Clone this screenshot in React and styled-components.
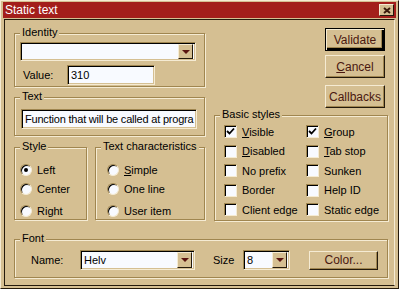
import React from 'react';
import styled, { createGlobalStyle } from 'styled-components';

const face = '#d5bf92';
const light = '#f5ebd3';
const shade = '#a08650';
const dark = '#241a0c';
const ink = '#4a1810';

const Global = createGlobalStyle`
  body {
    margin: 0;
    background: ${face};
    font-family: "Liberation Sans", Arial, sans-serif;
    font-size: 11px;
    color: #000;
  }
`

const Window = styled.div`
  box-sizing: border-box;
  width: 399px;
  height: 289px;
  background: ${face};
  border: 1px solid;
  border-color: ${light} ${dark} ${dark} ${light};
  padding: 1px;
  display: flex;
  flex-direction: column;
`
const TitleBar = styled.div`
  height: 16px;
  margin: 0 1px 0 1px;
  background: #a31e1b;
  color: #fff;
  display: flex;
  align-items: center;
  justify-content: space-between;
  padding: 0 2px 0 2px;
  font-size: 12px;
`
const CloseButton = styled.div`
  box-sizing: border-box;
  width: 15px;
  height: 12px;
  background: ${face};
  border: 1px solid;
  border-color: ${light} ${dark} ${dark} ${light};
  display: flex;
  align-items: center;
  justify-content: center;
`
const Client = styled.div`
  flex: 1;
  margin: 1px 2px 1px 2px;
  border: 1px solid ${dark};
  border-right-color: ${light};
  padding: 8px 0 0 9px;
`
const TopRow = styled.div`
  display: flex;
  align-items: flex-start;
  gap: 9px;
`
const Column = styled.div`
  display: flex;
  flex-direction: column;
  width: ${p => p.$w}px;
`
const Group = styled.div`
  position: relative;
  box-sizing: border-box;
  width: ${p => p.$w ? p.$w + 'px' : 'auto'};
  height: ${p => p.$h}px;
  margin-top: ${p => p.$mt || 0}px;
  border: 1px solid ${shade};
  box-shadow: 1px 1px 0 ${light}, inset 1px 1px 0 ${light};
`
const Legend = styled.span`
  position: absolute;
  top: -8px;
  left: 5px;
  padding: 0 2px;
  line-height: 13px;
  background: ${face};
`
const IdentityBody = styled.div`
  padding: 8px 0 0 5px;
  display: flex;
  flex-direction: column;
  gap: 4px;
`
const FieldRow = styled.div`
  display: flex;
  align-items: center;
`
const Label = styled.span`
  width: ${p => p.$w}px;
  padding-left: ${p => p.$pl || 0}px;
  margin-left: ${p => p.$ml || 0}px;
  flex-shrink: 0;
`
const Field = styled.div`
  box-sizing: border-box;
  width: ${p => p.$w}px;
  height: ${p => p.$h || 20}px;
  background: #f8faff;
  border: 1px solid;
  border-color: ${shade} ${light} ${light} ${shade};
  box-shadow: inset 1px 1px 0 #000, inset -1px -1px 0 ${face};
  display: flex;
  align-items: center;
  padding-left: 3px;
  white-space: nowrap;
  overflow: hidden;
  letter-spacing: ${p => p.$tight ? '-0.2px' : 'normal'};
`
const Combo = styled(Field)`
  padding: 0 2px 0 3px;
  justify-content: space-between;
`
const ComboText = styled.span`
  flex: 1;
`
const ArrowButton = styled.div`
  box-sizing: border-box;
  width: 15px;
  height: ${p => p.$h || 15}px;
  background: ${face};
  border: 1px solid;
  border-color: ${light} ${dark} ${dark} ${light};
  display: flex;
  align-items: center;
  justify-content: center;
  &::after {
    content: '';
    border-left: 4px solid transparent;
    border-right: 4px solid transparent;
    border-top: 4px solid #5a1410;
  }
`
const TextBody = styled.div`
  padding: 11px 0 0 6px;
`
const StyleRow = styled.div`
  display: flex;
  gap: 8px;
  margin-top: 11px;
`
const OptionList = styled.div`
  display: flex;
  flex-direction: column;
  padding: 15px 0 0 ${p => p.$pl}px;
`
const OptionRow = styled.label`
  display: flex;
  align-items: center;
  height: 13px;
  gap: ${p => p.$gap || 5}px;
  margin-top: ${p => p.$mt || 0}px;
`
const Radio = styled.span`
  box-sizing: border-box;
  width: 12px;
  height: 12px;
  border-radius: 50%;
  background: #f8faff;
  border: 1px solid;
  border-color: ${shade} ${light} ${light} ${shade};
  box-shadow: inset 1px 1px 0 #000;
  display: flex;
  align-items: center;
  justify-content: center;
  flex-shrink: 0;
  &::after {
    content: '';
    display: ${p => p.$on ? 'block' : 'none'};
    width: 4px;
    height: 4px;
    border-radius: 50%;
    background: #000;
  }
`
const Check = styled.span`
  box-sizing: border-box;
  width: 13px;
  height: 13px;
  background: #f8faff;
  border: 1px solid;
  border-color: ${shade} ${light} ${light} ${shade};
  box-shadow: inset 1px 1px 0 #000;
  display: flex;
  align-items: center;
  justify-content: center;
  flex-shrink: 0;
`
const U = styled.span`
  text-decoration: underline;
`
const ButtonStack = styled.div`
  display: flex;
  flex-direction: column;
  align-items: flex-end;
  padding-right: 3px;
`
const Button = styled.div`
  box-sizing: border-box;
  width: ${p => p.$w || 60}px;
  height: ${p => p.$h || 23}px;
  margin-top: ${p => p.$mt || 0}px;
  margin-left: ${p => p.$ml || 0}px;
  background: ${face};
  color: ${ink};
  font-size: 12px;
  display: flex;
  align-items: center;
  justify-content: center;
  border: 1px solid;
  border-color: ${p => p.$default ? `#000` : `${light} ${dark} ${dark} ${light}`};
  box-shadow: ${p => p.$default
    ? `inset 1px 1px 0 ${light}, inset -2px -2px 0 #000, inset -3px -3px 0 ${shade}`
    : `inset -1px -1px 0 ${shade}`};
`
const StyleGrid = styled.div`
  display: grid;
  grid-template-columns: 82px auto;
  grid-auto-rows: 19.5px;
  padding: 9px 0 0 9px;
`
const FontRow = styled.div`
  display: flex;
  align-items: center;
  padding: 10px 0 0 16px;
`

function CheckMark() {
  return (
    <svg width="9" height="9" viewBox="0 0 9 9">
      <path d="M1 4 L3.5 6.5 L8 1.5" fill="none" stroke="#000" strokeWidth="1.8" />
    </svg>
  );
}

function CheckOption({ on, children }) {
  return (
    <OptionRow $gap={5}>
      <Check>{on && <CheckMark />}</Check>
      <span>{children}</span>
    </OptionRow>
  );
}

export default function App() {
  return (
    <React.Fragment>
      <Global />
      <Window>
        <TitleBar>
          <span>Static text</span>
          <CloseButton>
            <svg width="8" height="7" viewBox="0 0 8 7">
              <path d="M1 1 L7 6 M7 1 L1 6" stroke="#3a1a0c" strokeWidth="2" />
            </svg>
          </CloseButton>
        </TitleBar>
        <Client>
          <TopRow>
            <Column $w={191}>
              <Group $h={54} $mt={5}>
                <Legend>Identity</Legend>
                <IdentityBody>
                  <Combo $w={176} $h={19}>
                    <ComboText />
                    <ArrowButton $h={15} />
                  </Combo>
                  <FieldRow>
                    <Label $w={44} $pl={3}>Value:</Label>
                    <Field $w={88}>310</Field>
                  </FieldRow>
                </IdentityBody>
              </Group>
              <Group $h={39} $mt={10}>
                <Legend>Text</Legend>
                <TextBody>
                  <Field $w={176} $h={20} $tight>Function that will be called at progra</Field>
                </TextBody>
              </Group>
              <StyleRow>
                <Group $w={73} $h={73}>
                  <Legend>Style</Legend>
                  <OptionList $pl={5}>
                    <OptionRow><Radio $on /><span>Left</span></OptionRow>
                    <OptionRow $mt={6}><Radio /><span>Center</span></OptionRow>
                    <OptionRow $mt={9}><Radio /><span>Right</span></OptionRow>
                  </OptionList>
                </Group>
                <Group $w={110} $h={73}>
                  <Legend>Text characteristics</Legend>
                  <OptionList $pl={11}>
                    <OptionRow><Radio /><span><U>S</U>imple</span></OptionRow>
                    <OptionRow $mt={6}><Radio /><span>One line</span></OptionRow>
                    <OptionRow $mt={9}><Radio /><span>User item</span></OptionRow>
                  </OptionList>
                </Group>
              </StyleRow>
            </Column>
            <Column $w={174}>
              <ButtonStack>
                <Button $default>Validate</Button>
                <Button $mt={4}><span><U>C</U>ancel</span></Button>
                <Button $mt={7}>Callbacks</Button>
              </ButtonStack>
              <Group $h={106} $mt={7}>
                <Legend>Basic styles</Legend>
                <StyleGrid>
                  <CheckOption on><U>V</U>isible</CheckOption>
                  <CheckOption on><U>G</U>roup</CheckOption>
                  <CheckOption><U>D</U>isabled</CheckOption>
                  <CheckOption><U>T</U>ab stop</CheckOption>
                  <CheckOption>No prefix</CheckOption>
                  <CheckOption>Sunken</CheckOption>
                  <CheckOption>Border</CheckOption>
                  <CheckOption>Help ID</CheckOption>
                  <CheckOption>Client edge</CheckOption>
                  <CheckOption>Static edge</CheckOption>
                </StyleGrid>
              </Group>
            </Column>
          </TopRow>
          <Group $w={374} $h={39} $mt={18}>
            <Legend>Font</Legend>
            <FontRow>
              <Label $w={49}>Name:</Label>
              <Combo $w={115} $h={20}>
                <ComboText>Helv</ComboText>
                <ArrowButton $h={16} />
              </Combo>
              <Label $w={30} $ml={18}>Size</Label>
              <Combo $w={47} $h={20}>
                <ComboText>8</ComboText>
                <ArrowButton $h={16} />
              </Combo>
              <Button $w={69} $h={19} $ml={19}>Color...</Button>
            </FontRow>
          </Group>
        </Client>
      </Window>
    </React.Fragment>
  );
}
